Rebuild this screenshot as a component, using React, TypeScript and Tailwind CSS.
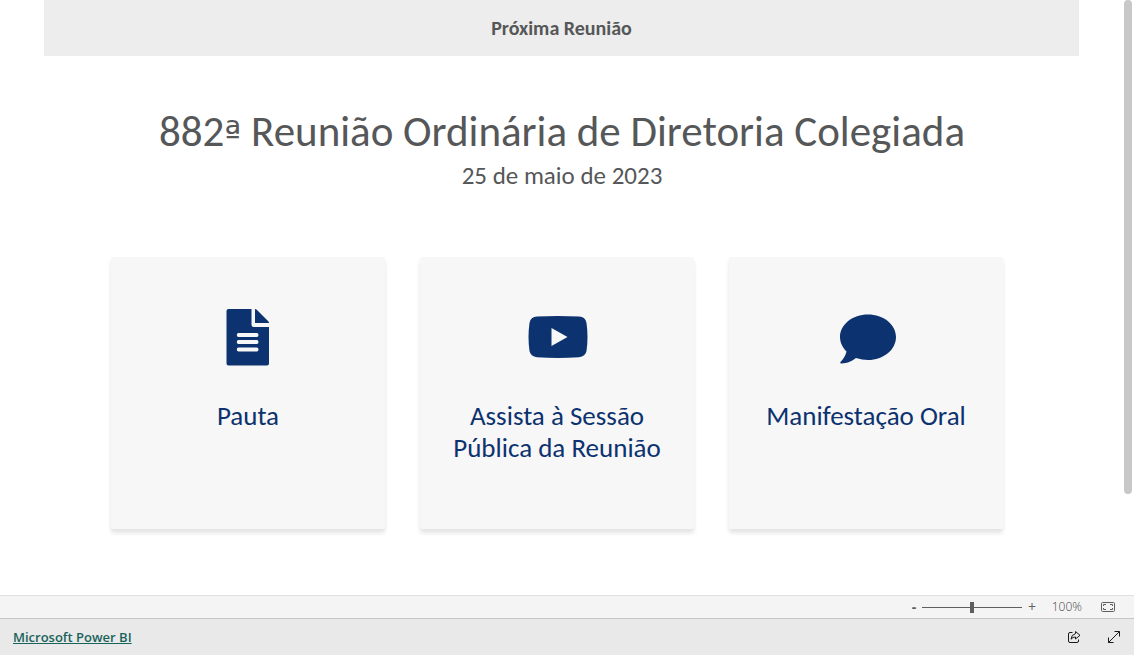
import type { ReactNode } from "react";

interface CardProps {
  href: string;
  icon: ReactNode;
  children: ReactNode;
}

function DocumentIcon() {
  return (
    <svg width="44" height="58" viewBox="0 0 44 58" fill="currentColor" aria-hidden="true">
      <path
        fillRule="evenodd"
        d="M2.500 1H25.500V16.500Q25.500 19 28 19H43V55.500Q43 57.500 41 57.500H2.500Q.5 57.500 .5 55.500V3Q.5 1 2.500 1ZM12.500 25Q10.800 25 10.800 27T12.500 29H30.800Q32.500 29 32.500 27T30.800 25ZM12.500 32Q10.800 32 10.800 34T12.500 36H30.800Q32.500 36 32.500 34T30.800 32ZM12.500 39.500Q10.800 39.500 10.800 41.500T12.500 43.500H30.800Q32.500 43.500 32.500 41.500T30.800 39.500Z"
      />
      <path d="M29 1Q30 1 31 2L42 13Q43 14 43 15H29Z" />
    </svg>
  );
}

function VideoIcon() {
  return (
    <svg width="62" height="44" viewBox="-2 0 62 44" fill="currentColor" aria-hidden="true">
      <path
        fillRule="evenodd"
        d="M9 1.600Q30 .4 51 1.600Q57.500 2 58.500 8Q60.500 22 58.500 36Q57.500 41.500 51 42.200Q30 43.600 9 42.200Q2.500 41.500 1.500 36Q-.5 22 1.500 8Q2.500 2 9 1.600ZM23.500 13V31L39.500 22Z"
      />
    </svg>
  );
}

function CommentIcon() {
  return (
    <svg width="60" height="54" viewBox="-4 -4 60 54" fill="currentColor" aria-hidden="true">
      <path d="M28 .5C12.500 .5 0 10.500 0 23C0 28.500 2.500 33.500 6.500 37.500C5.500 42 3 45.500 .4 48Q-.3 49.500 1.500 49.500C7.500 49.300 12.500 46.800 16 44C20 45.300 24 46 28 46C43.500 46 56 35.800 56 23C56 10.500 43.500 .5 28 .5Z" />
    </svg>
  );
}

function Card({ href, icon, children }: CardProps) {
  return (
    <a
      href={href}
      className="flex h-[272px] flex-col items-center rounded-xs bg-[#f7f7f7] pt-[50px] text-center text-[27px] leading-8 text-[#0c326f] shadow-[0_4px_4px_rgba(0,0,0,0.11)]"
    >
      <span className="flex h-[60px] items-center">{icon}</span>
      <span className="mt-[33px] max-w-56">{children}</span>
    </a>
  );
}

export default function App() {
  return (
    <div className="flex min-h-screen flex-col bg-white font-[Calibri,Carlito,Lato,sans-serif]">
      <div className="flex flex-1">
        <main className="flex-1">
          <header className="mr-[45px] ml-11 flex h-14 items-center justify-center bg-[#ededed]">
            <h2 className="text-[20px] leading-6 font-bold text-[#555759]">Próxima Reunião</h2>
          </header>

          <section className="pt-12 text-center text-[#555759]">
            <h1 className="text-[43px] leading-14">
              882<span className="font-['DejaVu_Sans',sans-serif] text-[36px] leading-none">ª</span> Reunião Ordinária de Diretoria Colegiada
            </h1>
            <p className="text-[25px] leading-8">25 de maio de 2023</p>
          </section>

          <nav className="grid grid-cols-3 gap-[35px] pt-[65px] pr-[121px] pb-12 pl-[111px]">
            <Card href="#pauta" icon={<DocumentIcon />}>
              Pauta
            </Card>
            <Card href="#sessao" icon={<VideoIcon />}>
              Assista à Sessão Pública da Reunião
            </Card>
            <Card href="#manifestacao" icon={<CommentIcon />}>
              Manifestação Oral
            </Card>
          </nav>
        </main>

        {/* Scroll track */}
        <div className="flex w-[10px] flex-col pr-[2px]">
          <div className="h-[83%] rounded-full bg-[#c8c8c8]" />
        </div>
      </div>

      {/* Zoom controls */}
      <div className="flex h-[23px] items-center justify-end border-t border-[#dfdfdf] bg-[#f4f4f4] pr-[18px] font-['Open_Sans',sans-serif] text-[#605e5c]">
        <button type="button" aria-label="Reduzir" className="w-4 text-[14px] leading-5 font-bold">
          -
        </button>
        <input
          type="range"
          aria-label="Zoom"
          min={0}
          max={100}
          defaultValue={50}
          className="h-3 w-[100px] appearance-none bg-transparent [&::-webkit-slider-runnable-track]:h-px [&::-webkit-slider-runnable-track]:bg-[#605e5c] [&::-webkit-slider-thumb]:-mt-[5px] [&::-webkit-slider-thumb]:h-[11px] [&::-webkit-slider-thumb]:w-1 [&::-webkit-slider-thumb]:appearance-none [&::-webkit-slider-thumb]:bg-[#605e5c]"
        />
        <button type="button" aria-label="Ampliar" className="w-5 text-[14px] leading-5">
          +
        </button>
        <span className="w-[58px] pr-[18px] text-right text-[12px] leading-5 font-light text-[#484644]">100%</span>
        <button type="button" aria-label="Ajustar à página">
          <svg width="16" height="12" viewBox="0 0 16 12" fill="none" stroke="currentColor" aria-hidden="true">
            <rect x="1.500" y="1.500" width="13" height="9" rx="1" />
            <path d="M6 3.500H3.500V5M3.500 7V8.500H6M10 3.500H12.500V5M12.500 7V8.500H10" />
          </svg>
        </button>
      </div>

      <footer className="flex h-[37px] items-center justify-between border-t border-[#c8c6c4] bg-[#e9e9e9] px-[13px]">
        <a href="#powerbi" className="font-['Open_Sans',sans-serif] text-[13px] leading-5 font-semibold text-[#18635c] underline">
          Microsoft Power BI
        </a>
        <div className="flex items-center gap-[26px] text-[#1b1a19]">
          <button type="button" aria-label="Compartilhar">
            <svg width="14" height="14" viewBox="0 0 14 14" fill="none" stroke="currentColor" strokeLinejoin="round" aria-hidden="true">
              <path d="M5.500 2.500H3Q1.500 2.500 1.500 4V11Q1.500 12.500 3 12.500H10Q11.500 12.500 11.500 11V9.500" />
              <path d="M8.500 1.500L13 5.300L8.500 9V7Q5.800 6.800 4 9.200Q4.300 4.500 8.500 3.700Z" />
            </svg>
          </button>
          <button type="button" aria-label="Tela inteira">
            <svg width="14" height="14" viewBox="0 0 14 14" fill="none" stroke="currentColor" aria-hidden="true">
              <path d="M1.500 12.500L12.500 1.500M7.500 1.500H12.500V6.500M1.500 7.500V12.500H6.500" />
            </svg>
          </button>
        </div>
      </footer>
    </div>
  );
}
